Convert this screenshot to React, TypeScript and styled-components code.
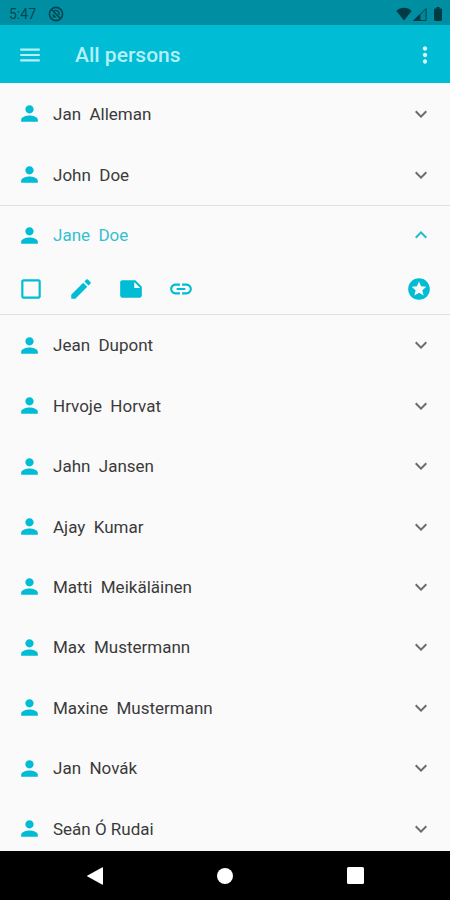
import React, { useState } from "react";
import styled, { createGlobalStyle } from "styled-components";
import {
  MdMenu,
  MdMoreVert,
  MdPerson,
  MdExpandMore,
  MdExpandLess,
  MdCheckBoxOutlineBlank,
  MdEdit,
  MdNote,
  MdLink,
  MdStars,
} from "react-icons/md";

const accent = "#00bcd4";

const GlobalStyle = createGlobalStyle`
  * { box-sizing: border-box; }
  body {
    margin: 0;
    background: #fafafa;
    font-family: Roboto, "Liberation Sans", sans-serif;
  }
`;

const Screen = styled.div`
  display: flex;
  flex-direction: column;
  height: 100vh;
`;

const StatusBar = styled.div`
  display: flex;
  align-items: center;
  flex: none;
  height: 25px;
  padding: 2px 4px 0 9px;
  background: #008fa2;
  color: #004651;
  font-size: 14px;
  line-height: 20px;
`;

const StatusGlyph = styled.svg`
  flex: none;
  margin-left: 12px;
`;

const StatusIcons = styled.div`
  display: flex;
  align-items: center;
  margin-left: auto;
  color: #003a43;

  > :last-child {
    margin-left: 2px;
  }
`;

const AppBar = styled.header`
  display: flex;
  align-items: center;
  flex: none;
  height: 58px;
  padding: 2px 8px 0 10px;
  background: ${accent};
  color: #b3f0f8;
`;

const Title = styled.h1`
  flex: 1;
  margin: 0 0 0 25px;
  font-size: 21px;
  line-height: 28px;
  font-weight: 500;
`;

const IconButton = styled.button<{ $narrow?: boolean }>`
  display: flex;
  align-items: center;
  justify-content: center;
  width: ${(p) => (p.$narrow ? 34 : 40)}px;
  height: 40px;
  padding: 0;
  border: 0;
  background: none;
  color: inherit;
  cursor: pointer;
`;

const MoreIcon = styled(MdMoreVert)`
  color: #d4f8fc;
`;

const Content = styled.main`
  flex: 1;
  min-height: 0;
  overflow: hidden;
`;

const PersonList = styled.ul<{ $minHeight: number }>`
  display: grid;
  grid-auto-rows: 1fr;
  min-height: ${(p) => p.$minHeight}px;
  margin: 0;
  padding: 0;
  list-style: none;
`;

const PersonItem = styled.li`
  display: flex;
`;

const PersonRow = styled.button<{ $active?: boolean }>`
  display: flex;
  align-items: center;
  width: 100%;
  min-height: 60px;
  padding: 0 17px ${(p) => (p.$active ? 2 : 0)}px 17px;
  border: 0;
  background: none;
  font: inherit;
  font-size: 17px;
  line-height: 24px;
  text-align: left;
  color: ${(p) => (p.$active ? "#36bfd0" : "#3a3a3a")};
  cursor: pointer;

  > svg:first-child {
    color: ${accent};
  }

  > svg:last-child {
    color: ${(p) => (p.$active ? "#1fb9cd" : "#6c6c6c")};
  }
`;

const Name = styled.span`
  flex: 1;
  margin-left: 11px;
  white-space: pre;
`;

const Expanded = styled.section`
  border-top: 1px solid #e0e0e0;
  border-bottom: 1px solid #e0e0e0;
`;

const Actions = styled.div`
  display: flex;
  align-items: center;
  gap: 10px;
  height: 48px;
  padding: 0 11px 2px;
  color: ${accent};

  > :last-child {
    margin-left: auto;
  }
`;

const NavBar = styled.nav`
  display: flex;
  align-items: center;
  justify-content: center;
  gap: 90px;
  flex: none;
  height: 49px;
  background: #000000;
  color: #ffffff;
`;

const before = ["Jan  Alleman", "John  Doe"];
const after = [
  "Jean  Dupont",
  "Hrvoje  Horvat",
  "Jahn  Jansen",
  "Ajay  Kumar",
  "Matti  Meikäläinen",
  "Max  Mustermann",
  "Maxine  Mustermann",
  "Jan  Novák",
  "Seán Ó Rudai",
];

function Person({ name }: { name: string }) {
  return (
    <PersonItem>
      <PersonRow aria-expanded={false}>
        <MdPerson size={25} />
        <Name>{name}</Name>
        <MdExpandMore size={24} />
      </PersonRow>
    </PersonItem>
  );
}

export default function App() {
  const [open, setOpen] = useState(true);

  return (
    <Screen>
      <GlobalStyle />
      <StatusBar>
        <span>5:47</span>
        <StatusGlyph width="16" height="16" viewBox="0 0 16 16" fill="none" stroke="currentColor">
          <circle cx="8" cy="8" r="6.6" strokeWidth="1.6" />
          <path d="M3.4 3.4l9.2 9.2" strokeWidth="1.5" />
          <path d="M6.2 4.6c3-1 5.4 1.2 5 4.6" strokeWidth="1.4" />
          <path d="M4.6 7.4L8.8 11.6H4.6z" fill="currentColor" stroke="none" />
        </StatusGlyph>
        <StatusIcons>
          <svg width="16" height="16" viewBox="0 0 16 16" fill="currentColor">
            <path d="M8 14.4L.4 4.9C2.500 2.800 5.200 1.700 8 1.700s5.500 1.100 7.600 3.200z" />
          </svg>
          <svg width="16" height="16" viewBox="0 0 16 16" fill="currentColor">
            <path d="M1 15L14.600 1.800V15z" opacity="0.45" />
            <path d="M1 15L8.500 7.700V15z" />
            <path d="M8.500 8L14 2.800V14.400H8.500z" fill="#008fa2" opacity="0.8" />
            <path d="M1.800 14.500L14 2.700V14.500z" fill="none" stroke="currentColor" opacity="0.7" />
          </svg>
          <svg width="16" height="16" viewBox="0 0 16 16" fill="currentColor">
            <path d="M6.500 1h3v1.500h1.300c.7 0 1.200.5 1.200 1.200v10.100c0 .7-.5 1.200-1.200 1.200H5.200c-.7 0-1.200-.5-1.200-1.200V3.700c0-.7.5-1.200 1.200-1.200h1.300z" />
          </svg>
        </StatusIcons>
      </StatusBar>

      <AppBar>
        <IconButton aria-label="Menu">
          <MdMenu size={26} />
        </IconButton>
        <Title>All persons</Title>
        <IconButton $narrow aria-label="More options">
          <MoreIcon size={26} />
        </IconButton>
      </AppBar>

      <Content>
        <PersonList $minHeight={122}>
          {before.map((name) => (
            <Person key={name} name={name} />
          ))}
        </PersonList>
        <Expanded>
          <PersonRow $active aria-expanded={open} onClick={() => setOpen(!open)}>
            <MdPerson size={25} />
            <Name>Jane  Doe</Name>
            {open ? <MdExpandLess size={24} /> : <MdExpandMore size={24} />}
          </PersonRow>
          {open && (
            <Actions>
              <IconButton aria-label="Select">
                <MdCheckBoxOutlineBlank size={26} />
              </IconButton>
              <IconButton aria-label="Edit">
                <MdEdit size={26} />
              </IconButton>
              <IconButton aria-label="Note">
                <MdNote size={26} />
              </IconButton>
              <IconButton aria-label="Link">
                <MdLink size={26} />
              </IconButton>
              <IconButton aria-label="Favourite">
                <MdStars size={26} />
              </IconButton>
            </Actions>
          )}
        </Expanded>
        <PersonList $minHeight={544}>
          {after.map((name) => (
            <Person key={name} name={name} />
          ))}
        </PersonList>
      </Content>

      <NavBar>
        <IconButton aria-label="Back">
          <svg width="18" height="18" viewBox="0 0 18 18" fill="currentColor">
            <path d="M17 1v16q0 1-1 .5L1.500 9.600q-1-.6 0-1.200L16 .5q1-.5 1 .5z" />
          </svg>
        </IconButton>
        <IconButton aria-label="Home">
          <svg width="16" height="16" viewBox="0 0 16 16" fill="currentColor">
            <circle cx="8" cy="8" r="8" />
          </svg>
        </IconButton>
        <IconButton aria-label="Recent apps">
          <svg width="17" height="17" viewBox="0 0 17 17" fill="currentColor">
            <rect width="17" height="17" rx="1.5" />
          </svg>
        </IconButton>
      </NavBar>
    </Screen>
  );
}
